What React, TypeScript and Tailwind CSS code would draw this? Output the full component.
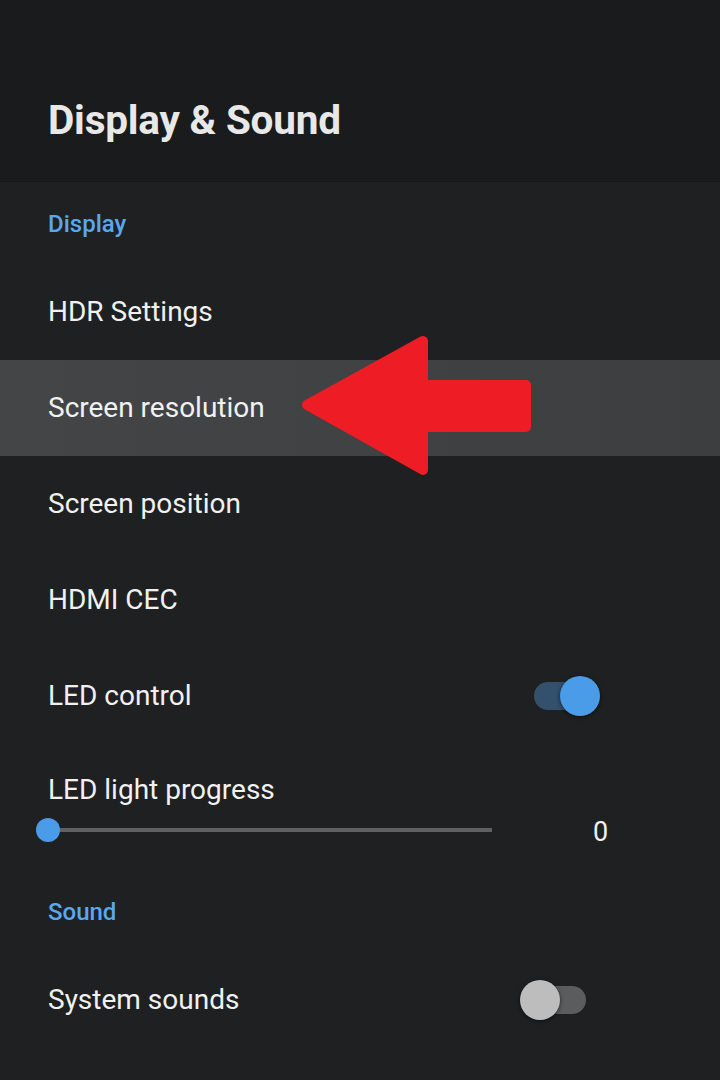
const font = { fontFamily: 'Roboto, "Noto Sans", sans-serif' };

function Row({ label, children, active }: { label: string; children?: React.ReactNode; active?: boolean }) {
  return (
    <div
      className={`h-[96px] flex items-center justify-between pl-[48px] ${
        active ? 'bg-gradient-to-r from-[#444547] to-[#3d3e40]' : ''
      }`}
    >
      <span className="text-[28px] text-[#f1f1f1] leading-none">{label}</span>
      {children}
    </div>
  );
}

function SectionHeader({ label }: { label: string }) {
  return (
    <div className="h-[82px] flex items-center pl-[48px] pt-[2px]">
      <span className="text-[24px] font-medium text-[#59a8ef] leading-none">{label}</span>
    </div>
  );
}

function Toggle({ on }: { on: boolean }) {
  if (on) {
    return (
      <div className="relative w-[66px] h-[40px] mr-[120px]">
        <div className="absolute left-0 top-[6px] w-[54px] h-[28px] rounded-full bg-[#34506c]" />
        <div className="absolute right-0 top-0 w-[40px] h-[40px] rounded-full bg-[#4a9be8] shadow-[0_1px_4px_rgba(0,0,0,0.6)]" />
      </div>
    );
  }
  return (
    <div className="relative w-[66px] h-[40px] mr-[134px]">
      <div className="absolute right-0 top-[6px] w-[60px] h-[28px] rounded-full bg-[#5b5c5e]" />
      <div className="absolute left-0 top-0 w-[40px] h-[40px] rounded-full bg-[#bdbdbd] shadow-[0_1px_4px_rgba(0,0,0,0.6)]" />
    </div>
  );
}

export default function App() {
  return (
    <div className="relative w-[720px] h-[1080px] overflow-hidden bg-[#1f2022]" style={font}>
      {/* Header */}
      <header className="h-[182px] bg-[#1a1b1d] border-b border-[#151618] pl-[48px] pt-[97px]">
        <h1 className="text-[40.5px] font-bold text-[#e8e8e8] leading-[46px] tracking-[-0.2px]">Display &amp; Sound</h1>
      </header>

      <SectionHeader label="Display" />
      <Row label="HDR Settings" />
      <Row label="Screen resolution" active />
      <Row label="Screen position" />
      <Row label="HDMI CEC" />
      <Row label="LED control">
        <Toggle on />
      </Row>

      {/* Slider */}
      <div className="h-[126px] flex flex-col">
        <div className="pl-[48px] pt-[32px] h-[72px]">
          <span className="text-[28px] text-[#f1f1f1] leading-none">LED light progress</span>
        </div>
        <div className="flex items-center h-[28px]">
          <div className="relative ml-[36px] w-[456px] h-[26px] flex items-center">
            <div className="ml-[12px] w-[444px] h-[4px] bg-[#5f6062]" />
            <div className="absolute left-0 top-[1px] w-[24px] h-[24px] rounded-full bg-[#4a9be8]" />
          </div>
          <span className="ml-[101px] text-[27px] text-[#f1f1f1] leading-none mt-[4px]">0</span>
        </div>
      </div>

      <SectionHeader label="Sound" />
      <Row label="System sounds">
        <Toggle on={false} />
      </Row>

      {/* Annotation arrow */}
      <svg className="absolute left-0 top-0 pointer-events-none" width="720" height="1080">
        <polygon
          points="307,405 423,341 423,385 526,385 526,427 423,427 423,470"
          fill="#ee1d25"
          stroke="#ee1d25"
          strokeWidth="10"
          strokeLinejoin="round"
        />
      </svg>
    </div>
  );
}
